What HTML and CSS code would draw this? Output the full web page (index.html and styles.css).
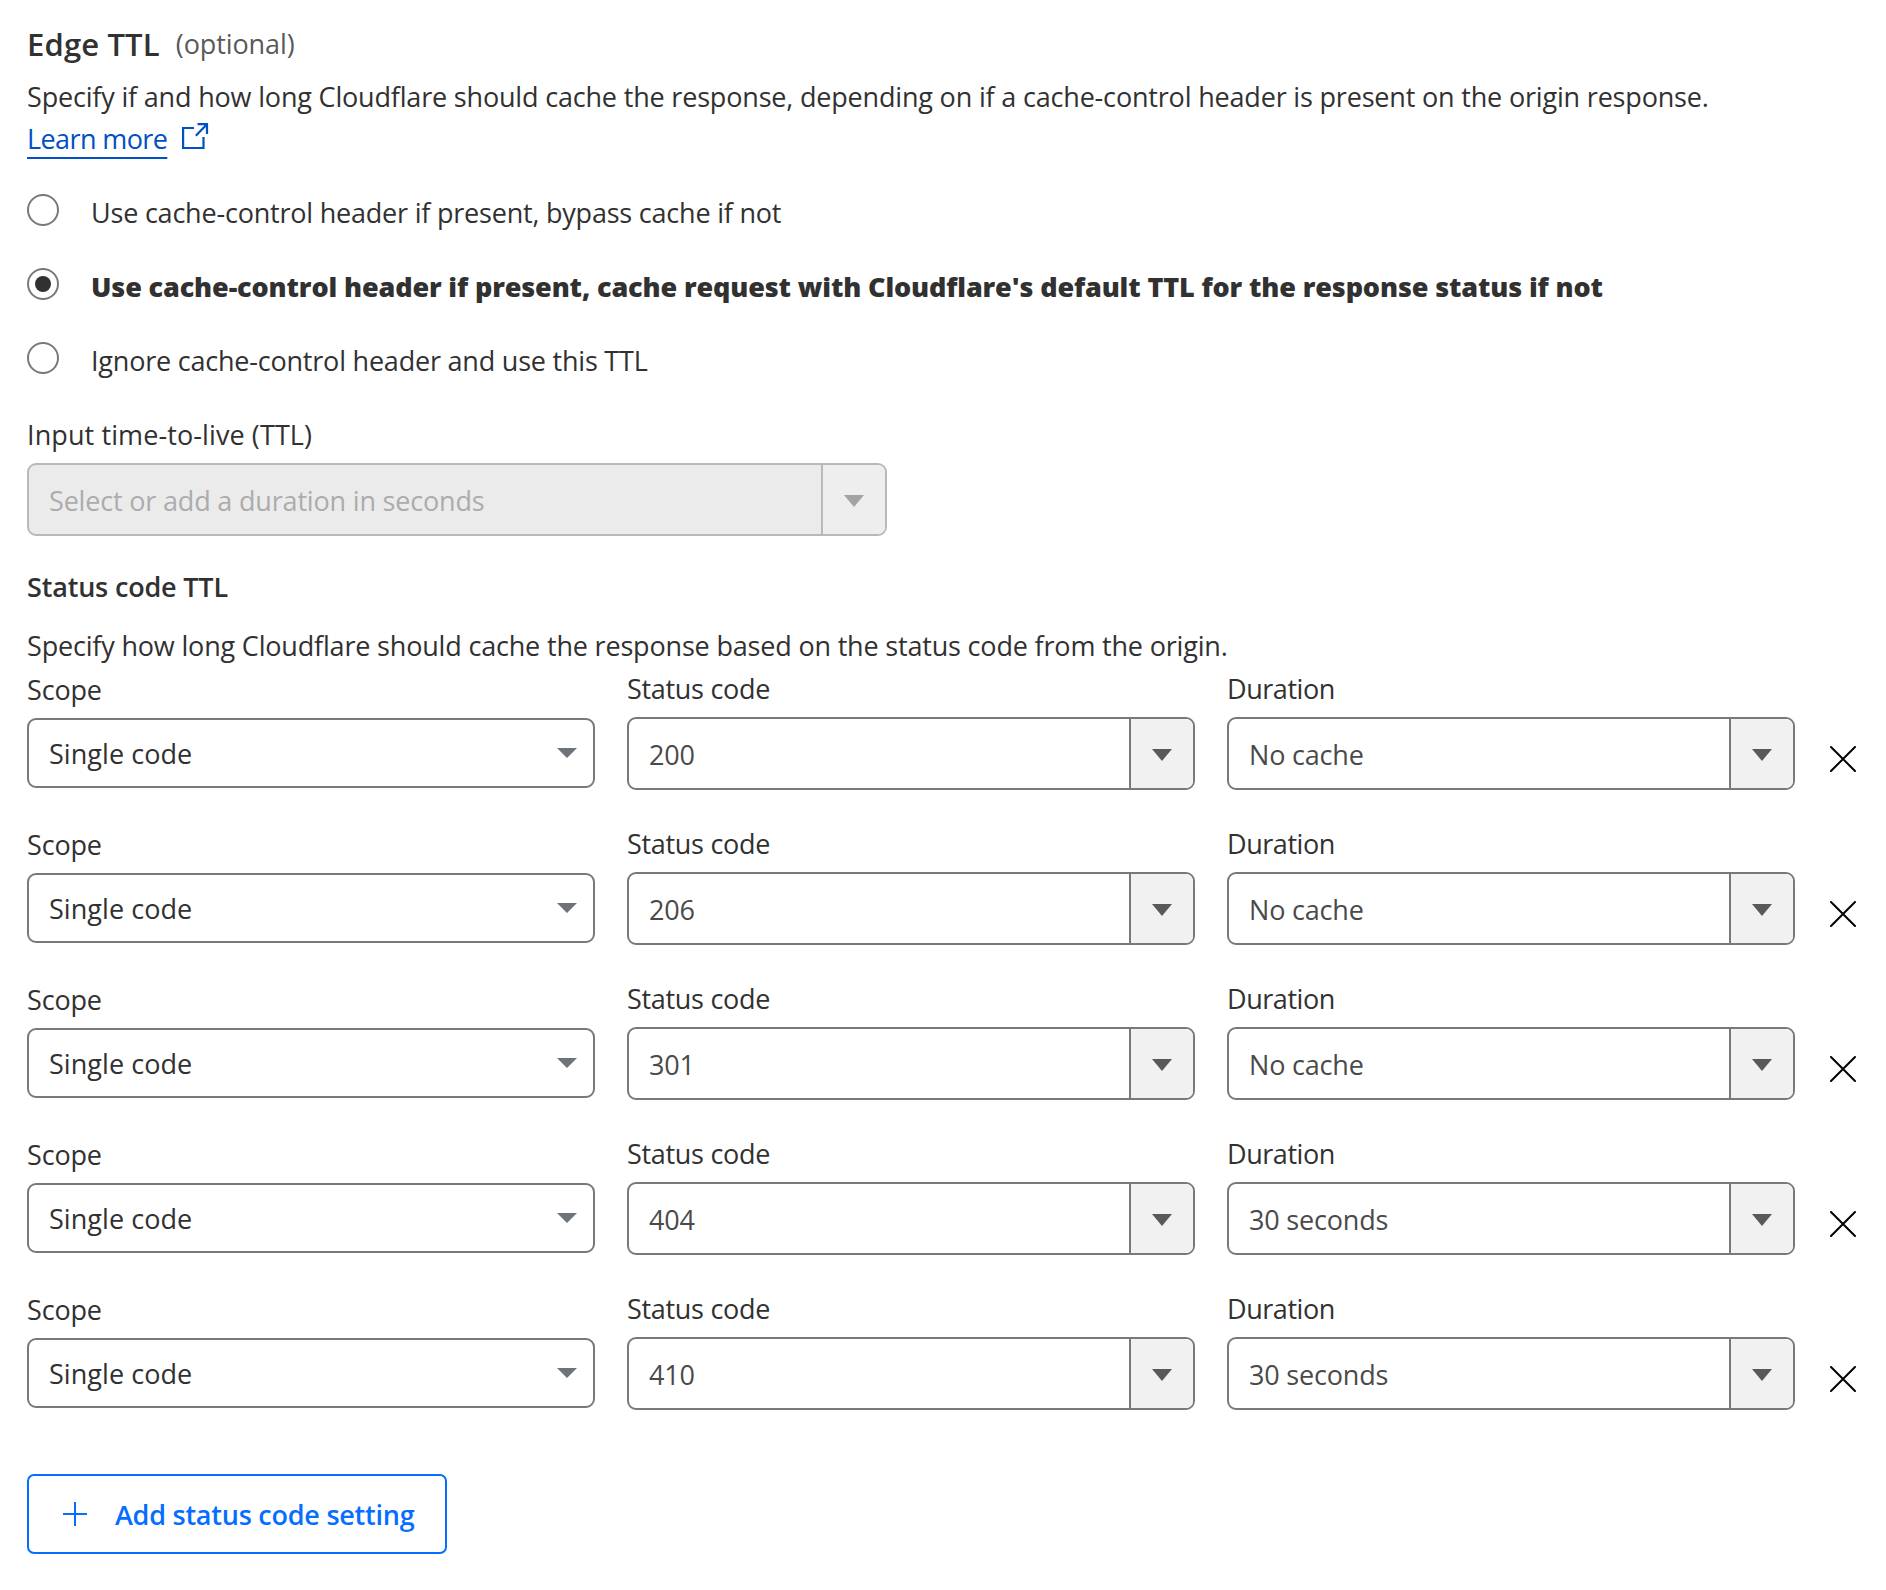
FILE: index.html
```html
<!DOCTYPE html>
<html lang="en">
<head>
<meta charset="utf-8">
<title>Edge TTL</title>
<link rel="stylesheet" href="styles.css">
</head>
<body>
<main class="panel">
  <header class="heading">
    <h2 class="title">Edge TTL</h2>
    <span class="optional">(optional)</span>
  </header>
  <p class="intro">Specify if and how long Cloudflare should cache the response, depending on if a cache-control header is present on the origin response.<br><a class="link">Learn more</a><svg class="external" width="28" height="28" viewBox="0 0 28 28" fill="none" stroke="currentColor" stroke-width="2.2"><path d="M13 6H2.1V26H22.5V15"/><path d="M16.5 2.2H26V12M26 2.2L14.8 13.8"/></svg></p>

  <div class="radios">
    <label class="option"><span class="radio"></span><span>Use cache-control header if present, bypass cache if not</span></label>
    <label class="option option-selected"><span class="radio radio-checked"></span><span>Use cache-control header if present, cache request with Cloudflare's default TTL for the response status if not</span></label>
    <label class="option"><span class="radio"></span><span>Ignore cache-control header and use this TTL</span></label>
  </div>

  <div class="field ttl">
    <span class="label label-ttl">Input time-to-live (TTL)</span>
    <div class="combo combo-disabled"><span class="value">Select or add a duration in seconds</span><span class="toggle"><svg class="arrow" width="20" height="12"><path d="M0 0H20L10 12Z"/></svg></span></div>
  </div>

  <h3 class="subtitle">Status code TTL</h3>
  <p class="description">Specify how long Cloudflare should cache the response based on the status code from the origin.</p>

  <div class="rows" id="rows"></div>

  <button class="add" type="button"><svg width="24" height="24" viewBox="0 0 24 24" stroke="currentColor" stroke-width="2"><path d="M0 12H24M12 0V24"/></svg><span class="add-text">Add status code setting</span></button>
</main>
<script src="rows.js"></script>
</body>
</html>
```
FILE: styles.css
```css
* { box-sizing: border-box; }

body {
  margin: 0;
  background: #fff;
  color: #313131;
  font: 400 27px/42px "Open Sans", "Noto Sans", sans-serif;
  letter-spacing: -0.18px;
}

h2, h3, p { margin: 0; }

.panel { padding: 23px 27px 0; }

.heading { display: flex; align-items: center; gap: 16px; height: 42px; }
.title { font-size: 31px; font-weight: 600; letter-spacing: 0.15px; }
.optional { color: #595959; letter-spacing: -0.1px; }

.intro { margin-top: 11px; white-space: nowrap; }
.link {
  color: #0051c3;
  letter-spacing: -0.6px;
  text-decoration: underline 2px;
  text-underline-offset: 8px;
  text-decoration-skip-ink: none;
}
.external { margin-left: 14px; color: #0051c3; vertical-align: -1px; }

.radios { display: grid; gap: 32px; margin-top: 32px; }
.option { display: flex; gap: 32px; height: 42px; white-space: nowrap; letter-spacing: -0.21px; }
.option-selected { font-weight: 800; letter-spacing: -0.13px; }
.radio {
  display: grid;
  place-items: center;
  flex: none;
  width: 32px;
  height: 32px;
  margin-top: 2px;
  border: 2px solid #797979;
  border-radius: 50%;
}
.radio-checked::before {
  content: "";
  width: 16px;
  height: 16px;
  border-radius: 50%;
  background: #313131;
}

.field { display: flex; flex-direction: column; gap: 7px; }
.ttl { width: 860px; margin-top: 32px; }
.label-ttl { letter-spacing: 0.1px; }
.label-status { letter-spacing: -0.3px; }
.label-duration { letter-spacing: -0.45px; }

.combo {
  display: flex;
  height: 73px;
  border: 2px solid #797979;
  border-radius: 9px;
  overflow: hidden;
}
.value {
  display: flex;
  align-items: center;
  flex: 1;
  padding: 3px 0 0 20px;
  color: #4a4a4a;
}
.toggle {
  display: flex;
  align-items: center;
  justify-content: center;
  width: 64px;
  padding-top: 3px;
  border-left: 2px solid #797979;
  background: #f1f1f1;
}
.arrow { fill: #595959; }

.combo-disabled { border-color: #b9b9b9; background: #ebebeb; }
.combo-disabled .value { color: #acacac; }
.combo-disabled .toggle { border-color: #b9b9b9; background: #eee; }
.combo-disabled .arrow { fill: #a3a3a3; }

.subtitle { margin-top: 30px; font-size: 27px; font-weight: 600; }
.description { margin-top: 17px; }

.rows { display: grid; gap: 33px; margin-top: 1px; }
.row { display: grid; grid-template-columns: 568px 568px 568px 26px; column-gap: 32px; height: 122px; }
.scope { padding-top: 1px; }
.select {
  display: flex;
  align-items: center;
  justify-content: space-between;
  height: 70px;
  padding: 0 16px 0 20px;
  border: 2px solid #797979;
  border-radius: 9px;
  letter-spacing: 0.06px;
}
.select-text { padding-top: 2px; }
.select .arrow { fill: #6d7378; }
.remove { margin: 78px 0 0 3px; }

.add {
  display: flex;
  align-items: center;
  gap: 28px;
  width: 420px;
  height: 80px;
  margin-top: 64px;
  padding: 0 0 0 34px;
  border: 2px solid #056eff;
  border-radius: 7px;
  background: #fff;
  color: #056eff;
  font: inherit;
  font-weight: 600;
  letter-spacing: -0.24px;
}
.add-text { padding-top: 2px; }
```
FILE: rows.js
```
const settings = [
  ["200", "No cache"],
  ["206", "No cache"],
  ["301", "No cache"],
  ["404", "30 seconds"],
  ["410", "30 seconds"],
];

const combo = (value) =>
  `<div class="combo"><span class="value">${value}</span><span class="toggle"><svg class="arrow" width="20" height="12"><path d="M0 0H20L10 12Z"/></svg></span></div>`;

document.getElementById("rows").innerHTML = settings.map(([code, duration]) => `
  <div class="row">
    <div class="field scope"><span class="label">Scope</span><div class="select"><span class="select-text">Single code</span><svg class="arrow" width="20" height="10"><path d="M0 0H20L10 10Z"/></svg></div></div>
    <div class="field"><span class="label label-status">Status code</span>${combo(code)}</div>
    <div class="field"><span class="label label-duration">Duration</span>${combo(duration)}</div>
    <svg class="remove" width="26" height="26" viewBox="0 0 26 26" stroke="#000" stroke-width="2" stroke-linecap="round"><path d="M1 1L25 25M25 1L1 25"/></svg>
  </div>`).join("");
```
